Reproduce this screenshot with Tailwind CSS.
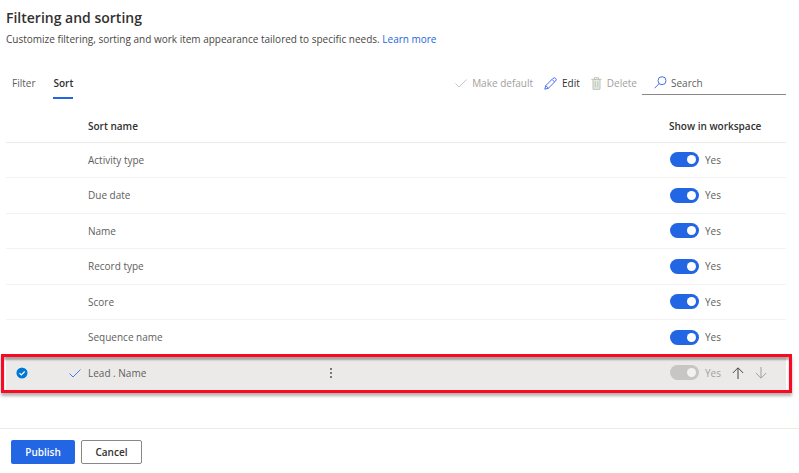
<!DOCTYPE html>
<html lang="en">
<head>
    <meta charset="UTF-8">
    <meta name="viewport" content="width=device-width, initial-scale=1.0">
    <title>Filtering and sorting</title>
    <script src="https://cdn.jsdelivr.net/npm/@tailwindcss/browser@4"></script>
</head>
<body class="bg-white text-[#605e5c] font-['Segoe_UI','Open_Sans',sans-serif] text-[10px] leading-4 min-h-screen flex flex-col">
    <main class="pl-[6px] pr-[13px] pt-2">
        <h1 class="text-sm leading-5 font-semibold text-[#323130]">Filtering and sorting</h1>
        <p class="mt-[3px] text-[#484644]">Customize filtering, sorting and work item appearance tailored to specific needs. <a href="#" class="text-[#2266e3]">Learn more</a></p>

        <!-- Tabs and toolbar -->
        <div class="mt-6 flex justify-between items-start">
            <div role="tablist" class="flex gap-[18px] pl-[6px]">
                <button role="tab" class="h-7 flex pt-1">Filter</button>
                <button role="tab" aria-selected="true" class="h-7 flex pt-1 font-semibold text-[#323130] border-b-2 border-[#2266e3]">Sort</button>
            </div>
            <div class="flex items-center h-6">
                <button disabled class="flex items-center gap-[5px] text-[#a19f9d]">
                    <svg class="w-3 h-3" viewBox="0 0 12 12" fill="none" stroke="#c8c6c4"><path d="M.5 6.5 4 10 11.5 2.5"/></svg>
                    Make default
                </button>
                <button class="ml-[11px] flex items-center gap-[5px] text-[#323130]">
                    <svg class="w-[13px] h-[13px]" viewBox="0 0 13 13" fill="none" stroke="#4a6fe8" stroke-linejoin="round"><path d="M.8 12.2 1.8 8.6 9 1.4a1.8 1.8 0 0 1 2.6 2.6L4.4 11.2zM8 2.4 10.6 5M1.8 8.6l2.6 2.6"/></svg>
                    Edit
                </button>
                <button disabled class="ml-[11px] flex items-center gap-[5px] text-[#a19f9d]">
                    <svg class="w-[11px] h-[13px]" viewBox="0 0 11 13" fill="none" stroke="#bfc4b9"><path d="M2 2.5h7v9.8H2z" fill="#e3ebe0"/><path d="M.3 2.3h10.4M3.5 2V.7h4V2M4.2 4.5v6M6.8 4.5v6"/></svg>
                    Delete
                </button>
                <label class="ml-[5px] w-36 h-6 flex items-center gap-1 pl-3 border-b border-[#8a8886]">
                    <svg class="w-[13px] h-[13px] shrink-0" viewBox="0 0 13 13" fill="none" stroke="#4a6fe8"><circle cx="8" cy="4.7" r="4"/><path d="M5.2 7.5.5 12.3"/></svg>
                    <input type="search" aria-label="Search" placeholder="Search" class="min-w-0 flex-1 outline-none placeholder:text-[#605e5c]">
                </label>
            </div>
        </div>

        <!-- Sort list -->
        <table class="mt-2 w-full table-fixed border-collapse text-left">
            <thead>
                <tr class="h-[35px] border-b border-[#edebe9] text-[#323130]">
                    <th class="w-[63px]"></th>
                    <th class="w-[19px]"></th>
                    <th class="pt-1 font-semibold">Sort name</th>
                    <th class="w-[461px]"></th>
                    <th class="w-[117px] pt-1 font-semibold">Show in workspace</th>
                </tr>
            </thead>
            <tbody>
                <tr class="h-[35px] even:h-9 border-b border-[#f3f2f1]">
                    <td></td><td></td><td>Activity type</td><td></td>
                    <td><label class="flex items-center gap-[6px] pl-[1px]"><input type="checkbox" role="switch" checked class="appearance-none w-[29px] h-[15px] rounded-full bg-[#2266e3] flex items-center justify-end pr-[3px] before:w-[9px] before:h-[9px] before:rounded-full before:bg-white">Yes</label></td>
                </tr>
                <tr class="h-[35px] even:h-9 border-b border-[#f3f2f1]">
                    <td></td><td></td><td>Due date</td><td></td>
                    <td><label class="flex items-center gap-[6px] pl-[1px]"><input type="checkbox" role="switch" checked class="appearance-none w-[29px] h-[15px] rounded-full bg-[#2266e3] flex items-center justify-end pr-[3px] before:w-[9px] before:h-[9px] before:rounded-full before:bg-white">Yes</label></td>
                </tr>
                <tr class="h-[35px] even:h-9 border-b border-[#f3f2f1]">
                    <td></td><td></td><td>Name</td><td></td>
                    <td><label class="flex items-center gap-[6px] pl-[1px]"><input type="checkbox" role="switch" checked class="appearance-none w-[29px] h-[15px] rounded-full bg-[#2266e3] flex items-center justify-end pr-[3px] before:w-[9px] before:h-[9px] before:rounded-full before:bg-white">Yes</label></td>
                </tr>
                <tr class="h-[35px] even:h-9 border-b border-[#f3f2f1]">
                    <td></td><td></td><td>Record type</td><td></td>
                    <td><label class="flex items-center gap-[6px] pl-[1px]"><input type="checkbox" role="switch" checked class="appearance-none w-[29px] h-[15px] rounded-full bg-[#2266e3] flex items-center justify-end pr-[3px] before:w-[9px] before:h-[9px] before:rounded-full before:bg-white">Yes</label></td>
                </tr>
                <tr class="h-[35px] even:h-9 border-b border-[#f3f2f1]">
                    <td></td><td></td><td>Score</td><td></td>
                    <td><label class="flex items-center gap-[6px] pl-[1px]"><input type="checkbox" role="switch" checked class="appearance-none w-[29px] h-[15px] rounded-full bg-[#2266e3] flex items-center justify-end pr-[3px] before:w-[9px] before:h-[9px] before:rounded-full before:bg-white">Yes</label></td>
                </tr>
                <tr class="h-[35px] even:h-9 border-b border-[#f3f2f1]">
                    <td></td><td></td><td>Sequence name</td><td></td>
                    <td><label class="flex items-center gap-[6px] pl-[1px]"><input type="checkbox" role="switch" checked class="appearance-none w-[29px] h-[15px] rounded-full bg-[#2266e3] flex items-center justify-end pr-[3px] before:w-[9px] before:h-[9px] before:rounded-full before:bg-white">Yes</label></td>
                </tr>
                <!-- Selected row, outlined in red -->
                <tr class="relative h-[35px] bg-[#ebeae8]">
                    <td>
                        <div class="pl-[10px]"><svg class="w-3 h-3" viewBox="0 0 12 12"><circle cx="6" cy="6" r="6" fill="#fff"/><circle cx="6" cy="6" r="5.6" fill="#0078d4"/><path d="M3.5 6.2 5.3 8 8.7 4.5" fill="none" stroke="#fff" stroke-width="1.2"/></svg></div>
                        <div class="absolute -left-[5px] -right-[6px] -top-[1px] -bottom-[3px] border-3 border-[#fa0a22] shadow-[0_3px_3px_rgba(0,0,0,0.3),inset_0_3px_2px_rgba(0,0,0,0.3)] pointer-events-none"></div>
                    </td>
                    <td><svg class="w-3 h-3" viewBox="0 0 12 12" fill="none" stroke="#4a7be8"><path d="M.5 6.5 4 10 11.5 2.5"/></svg></td>
                    <td>Lead . Name</td>
                    <td>
                        <button aria-label="More commands" class="block ml-[119px]"><svg class="w-2 h-3" viewBox="0 0 8 12" fill="#797775"><path d="M3 1h2v2H3zM3 5h2v2H3zM3 9h2v2H3z"/></svg></button>
                    </td>
                    <td>
                        <div class="flex items-center">
                            <label class="flex items-center gap-[6px] pl-[1px] text-[#a19f9d]"><input type="checkbox" role="switch" checked disabled class="appearance-none w-[29px] h-[15px] rounded-full bg-[#c8c6c4] flex items-center justify-end pr-[3px] before:w-[9px] before:h-[9px] before:rounded-full before:bg-[#f3f2f1]">Yes</label>
                            <button aria-label="Move up" class="ml-[11px]"><svg class="w-3 h-3" viewBox="0 0 12 12" fill="none" stroke="#484644"><path d="M6 12V1M.8 6 6 .8 11.2 6"/></svg></button>
                            <button aria-label="Move down" disabled class="ml-[11px]"><svg class="w-3 h-3" viewBox="0 0 12 12" fill="none" stroke="#a19f9d"><path d="M6 0v11M.8 6 6 11.2 11.2 6"/></svg></button>
                        </div>
                    </td>
                </tr>
            </tbody>
        </table>
    </main>

    <footer class="mt-auto flex gap-[6px] border-t border-[#edebe9] pl-[11px] pt-[11px] pb-[9px]">
        <button class="w-16 h-6 rounded-[2px] bg-[#2266e3] font-semibold text-white">Publish</button>
        <button class="w-[61px] h-6 rounded-[2px] border border-[#8a8886] font-semibold text-[#323130]">Cancel</button>
    </footer>
</body>
</html>
